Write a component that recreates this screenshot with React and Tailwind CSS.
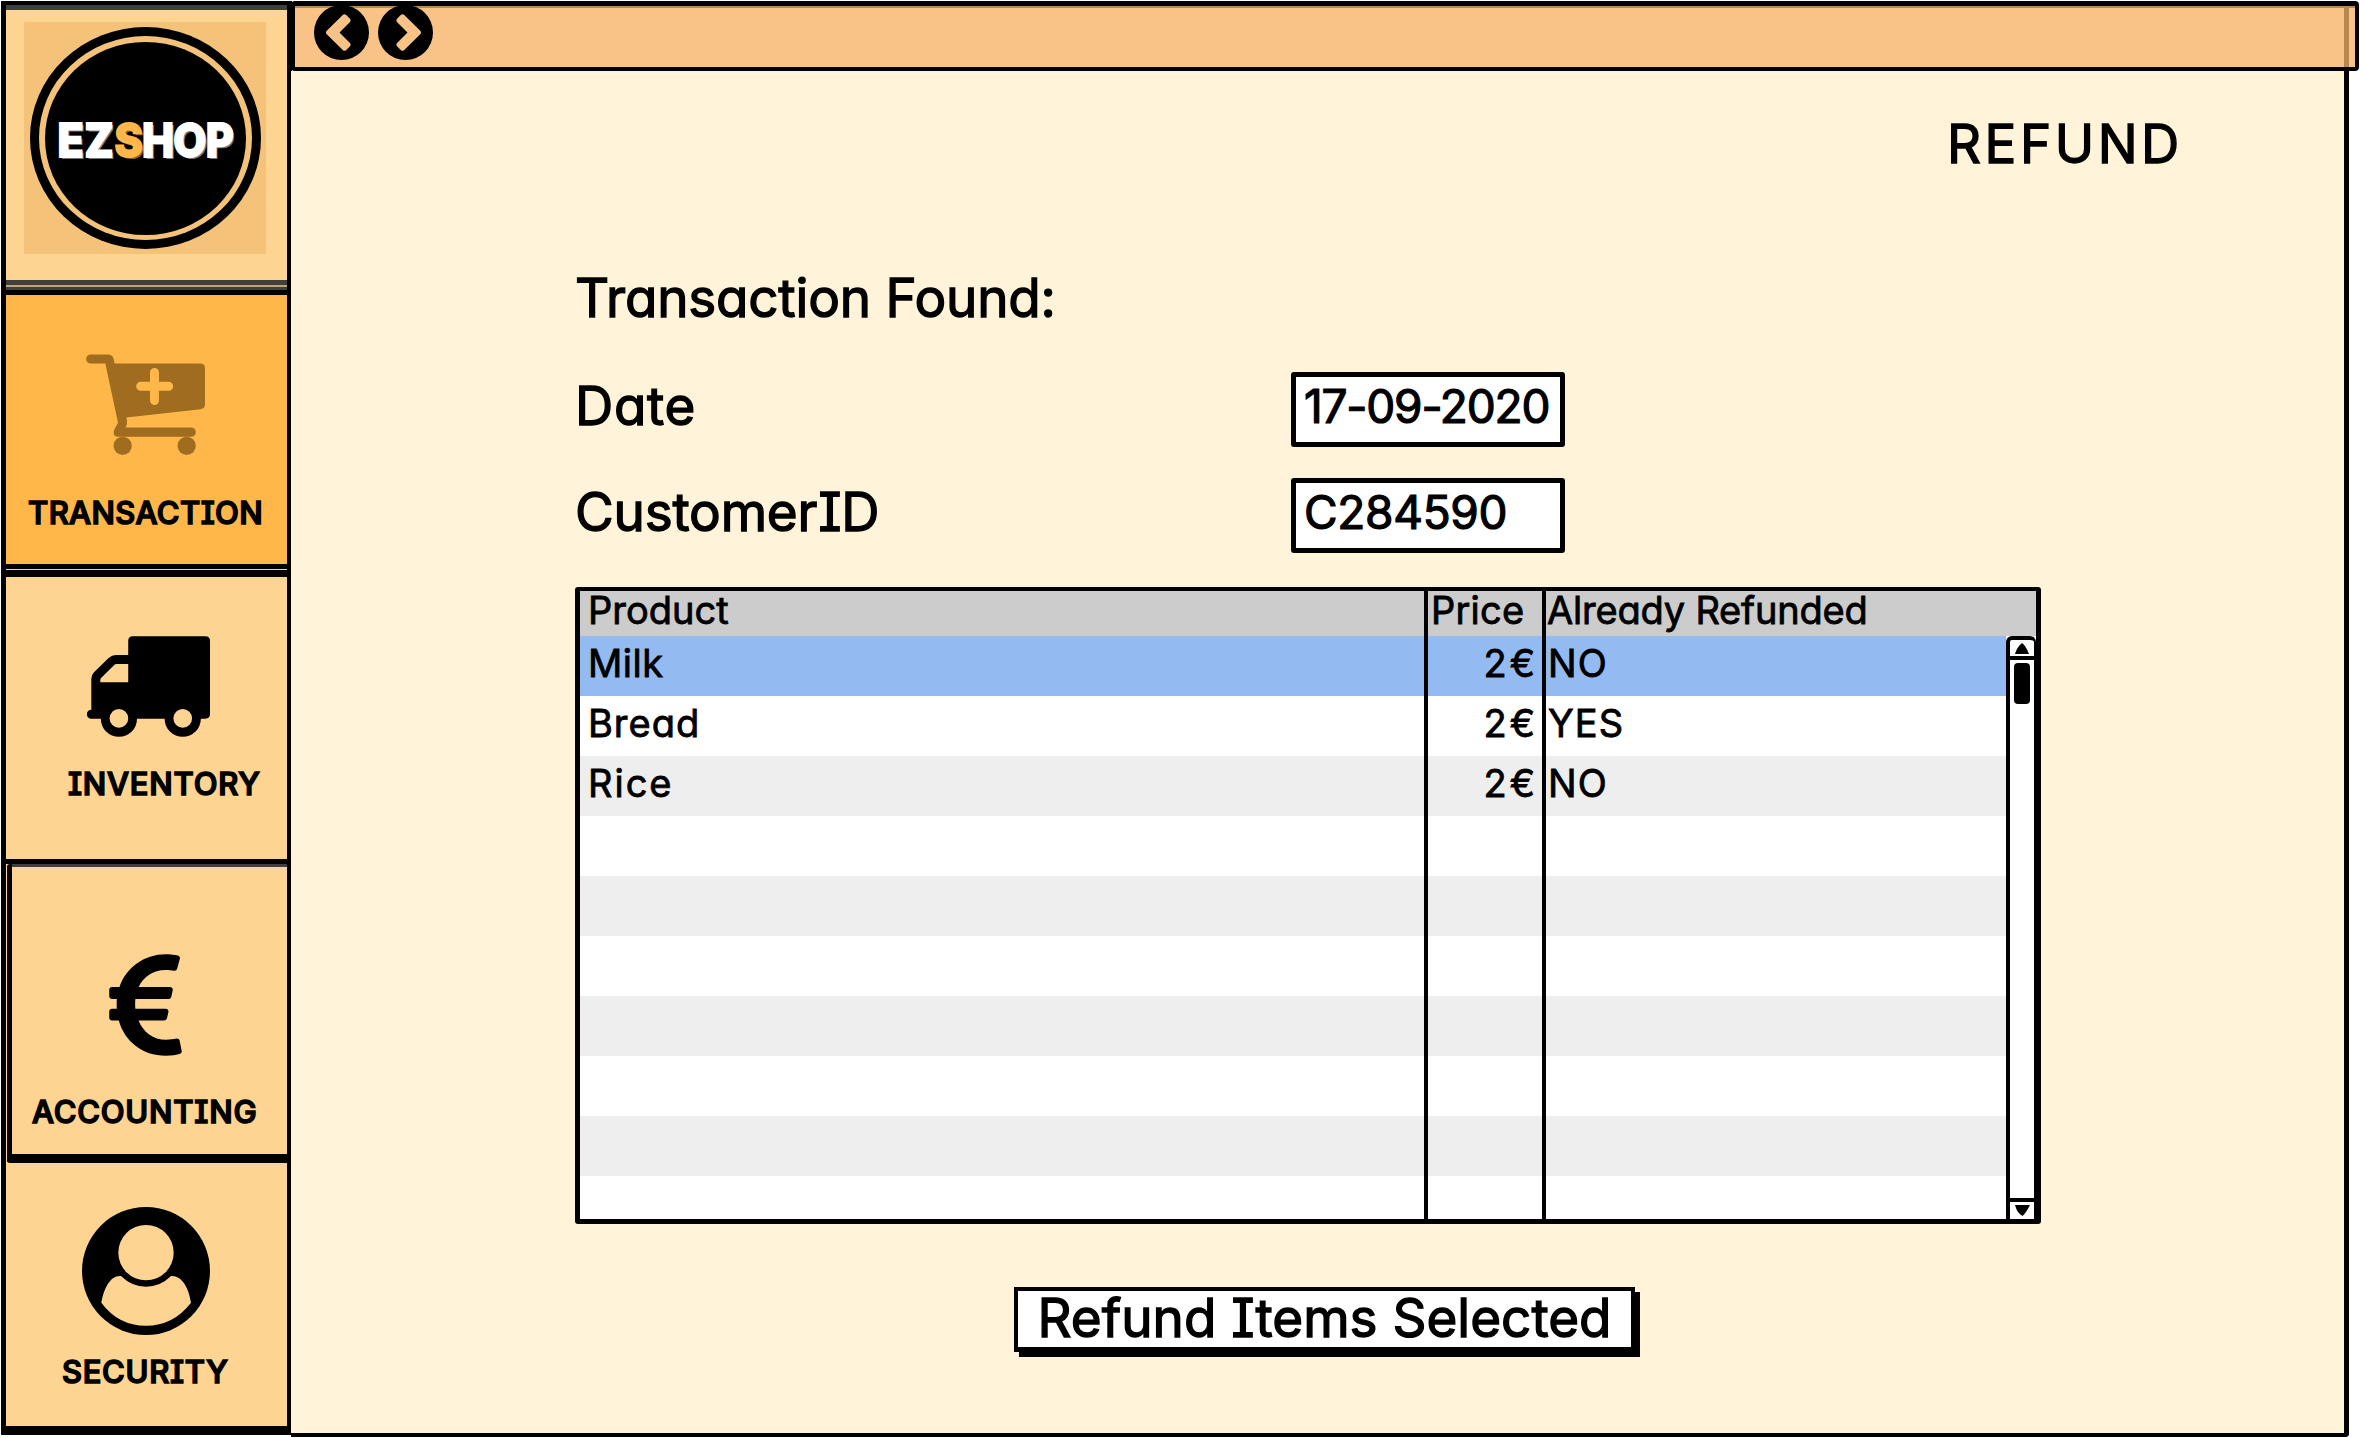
import clsx from "clsx";
import { FaEuroSign } from "react-icons/fa";

const navLabel =
  "text-[31px] leading-10 font-medium whitespace-nowrap [-webkit-text-stroke:1.6px_black]";
const heading =
  "text-[53px] leading-[60px] whitespace-nowrap [-webkit-text-stroke:1.3px_black]";
const tableText =
  "text-[38px] leading-[44px] whitespace-nowrap [-webkit-text-stroke:0.8px_black]";

function Logo() {
  return (
    <div className="ml-[18px] flex h-[232px] w-[242px] items-center justify-center bg-[#f4c279]">
      <div className="flex h-[222px] w-[231px] items-center justify-center rounded-[50%] bg-black">
        <div className="flex h-[204px] w-[213px] items-center justify-center rounded-[50%] bg-[#f4c279]">
          <div className="flex h-[193px] w-[201px] items-center justify-center rounded-[50%] bg-black pt-1">
            <span className="inline-block scale-x-[0.93] text-[46px] leading-none font-extrabold tracking-[-0.8px] whitespace-nowrap text-white [-webkit-text-stroke:2px_white] [text-shadow:2px_2px_0_#777]">
              <span className="tracking-[1px]">EZ</span>
              <span className="text-[#ffb74a] [-webkit-text-stroke:2px_#ffb74a] [text-shadow:2px_2px_0_#8a6428]">
                S
              </span>
              HOP
            </span>
          </div>
        </div>
      </div>
    </div>
  );
}

function CartIcon() {
  return (
    <svg viewBox="258 253 357 302" className="h-[101px] w-[119px] fill-[#a06c20]">
      <path
        fillRule="evenodd"
        d="M272 254H324Q338 254 341 268L344 281H601Q615 281 615 295V404Q615 416 602 418L379 443Q382 450 381 462L377 473H573.500A14 14 0 0 1 573.500 501H355Q341 501 341 488Q341 483 344 477L354 459L316 281H272A13.500 13.500 0 0 1 272 254ZM450 308V336H422A13.500 13.500 0 0 0 422 363H450V392A13.500 13.500 0 0 0 477 392V363H506A13.500 13.500 0 0 0 506 336H477V308A13.500 13.500 0 0 0 450 308Z"
      />
      <circle cx="368" cy="528" r="27.5" />
      <circle cx="560" cy="528" r="27.5" />
    </svg>
  );
}

function TruckIcon() {
  return (
    <svg viewBox="260 229 370 302" className="h-[101px] w-[123px]">
      <path
        fillRule="evenodd"
        d="M384 243Q384 229 398 229H616Q630 229 630 243V463Q630 477 616 477H273A13.500 13.500 0 0 1 273 450V357Q273 345 281 337L325 294Q335 285 347 285H384ZM349 312Q345 312 342 315L303 354Q300 357 300 361V367H384V312Z"
      />
      <circle cx="356" cy="477" r="54.500" />
      <circle cx="548" cy="477" r="54.500" />
      <circle cx="356" cy="476" r="28" fill="#fed492" />
      <circle cx="548" cy="476" r="28" fill="#fed492" />
    </svg>
  );
}

function UserIcon() {
  return (
    <svg viewBox="246 211 384 384" className="size-32">
      <circle cx="438" cy="403" r="192" />
      <circle cx="438" cy="348" r="83" fill="#fed492" />
      <path
        fill="#fed492"
        d="M304 498C313 450 333 415 363 418Q395 450 438 450Q481 450 513 418C543 415 566 450 573 498Q520 567 438 567Q355 567 304 498Z"
      />
    </svg>
  );
}

function ArrowButton({ next }) {
  return (
    <button type="button" aria-label={next ? "Forward" : "Back"} className="size-[55px]">
      <svg viewBox="0 0 55 55" className={clsx("size-[55px]", next && "-scale-x-100")}>
        <circle cx="27.500" cy="27.500" r="27.500" />
        <path
          d="M12.500 26Q11.300 27.500 12.500 29L29 45.200Q30.500 46.500 32 45.200L36 41.300Q37.500 39.500 36 38L25.500 27.500L36 17Q37.500 15.500 36 13.700L32 9.800Q30.500 8.500 29 9.800Z"
          fill="#f9c387"
        />
      </svg>
    </button>
  );
}

function Sidebar() {
  return (
    <aside className="flex h-[1434px] w-[291px] shrink-0 flex-col border-x-[5px] border-b-[9px] border-black bg-[#fed492]">
      <div className="h-[289px] border-t-[4px] border-black">
        <div className="h-[5px] bg-[#3f3f3f]" />
        <div className="h-[270px] pt-[12px]">
          <Logo />
        </div>
        <div className="h-[5px] bg-[#3f3f3f]" />
        <div className="h-[2px] bg-[#c0a27a]" />
        <div className="h-[3px] bg-[#3f3f3f]" />
      </div>
      <div className="flex h-[279px] flex-col border-y-[5px] border-black bg-[#ffb74a]">
        <div className="mt-[59px] ml-[80px]">
          <CartIcon />
        </div>
        <div className={clsx(navLabel, "mt-[38px] ml-[22px] tracking-[0.4px]")}>TRANSACTION</div>
      </div>
      <div className="mt-px flex h-[294px] flex-col border-t-[7px] border-b-[5px] border-black">
        <div className="mt-[59px] ml-[81px]">
          <TruckIcon />
        </div>
        <div className={clsx(navLabel, "mt-[27px] ml-[62px] tracking-[0.8px]")}>INVENTORY</div>
      </div>
      <div className="ml-px flex h-[299px] flex-col rounded-l-[3px] border-b-[9px] border-l-[5px] border-black">
        <div className="h-[3px] bg-[#3f3f3f]" />
        <FaEuroSign className="mt-[80px] ml-[97px] h-[116px] w-[73px]" />
        <div className={clsx(navLabel, "mt-[29px] ml-[20px] tracking-[0.8px]")}>ACCOUNTING</div>
      </div>
      <div className="flex flex-col">
        <div className="mt-[44px] ml-[76px]">
          <UserIcon />
        </div>
        <div className={clsx(navLabel, "mt-[17px] ml-[56px] tracking-[0.7px]")}>SECURITY</div>
      </div>
    </aside>
  );
}

function Topbar() {
  return (
    <header className="flex h-[70px] w-[2068px] items-start rounded-sm border-[4px] border-t-[5px] border-black bg-[#f9c387]">
      <div className="flex h-full w-full border-t-[2px] border-[#b98750]">
        <div className="-mt-[3px] ml-[19px] flex flex-1 gap-[9px]">
          <ArrowButton />
          <ArrowButton next />
        </div>
        <div className="mr-[6px] w-[5px] bg-[#b98750]" />
      </div>
    </header>
  );
}

function Field({ label, value, className, valueClassName }) {
  return (
    <div className="flex h-[75px] w-[990px] items-center justify-between">
      <span className={clsx(heading, "pb-[8px]", className)}>{label}</span>
      <div className="flex h-[75px] w-[274px] items-center rounded-[3px] border-[5px] border-black bg-white pb-[8px] pl-[8px]">
        <span
          className={clsx(
            "text-[46px] leading-none whitespace-nowrap [-webkit-text-stroke:1.2px_black]",
            valueClassName,
          )}
        >
          {value}
        </span>
      </div>
    </div>
  );
}

const rows = [
  { product: "Milk", price: "2€", refunded: "NO", bg: "bg-[#94baf2]", gap: "tracking-[0.5px]" },
  { product: "Bread", price: "2€", refunded: "YES", bg: "bg-white", gap: "tracking-[1px]" },
  { product: "Rice", price: "2€", refunded: "NO", bg: "bg-[#eeeeee]", gap: "tracking-[2px]" },
  { bg: "bg-white" },
  { bg: "bg-[#eeeeee]" },
  { bg: "bg-white" },
  { bg: "bg-[#eeeeee]" },
  { bg: "bg-white" },
  { bg: "bg-[#eeeeee]" },
  { bg: "bg-white" },
];

const columns = "grid grid-cols-[844px_4px_114px_4px_1fr]";

function Scrollbar() {
  return (
    <div className="flex w-[30px] shrink-0 flex-col rounded-t-md border-t-[4px] border-r-[2px] border-l-[4px] border-black bg-white">
      <div className="flex h-[20px] items-center justify-center border-b-[4px] border-black">
        <svg viewBox="0 0 16 11" className="h-[11px] w-4">
          <path d="M1 11Q3 4 8 0Q12 3 15 11Z" />
        </svg>
      </div>
      <div className="mt-[3px] ml-[4px] h-[41px] w-[16px] rounded-[4px] bg-black" />
      <div className="flex-1" />
      <div className="flex h-[21px] items-center justify-center border-t-[4px] border-black">
        <svg viewBox="0 0 15 11" className="h-[11px] w-[15px]">
          <path d="M0 0H15Q11 8 7.500 11Q2 8 0 0Z" />
        </svg>
      </div>
    </div>
  );
}

function ProductTable() {
  return (
    <div className="flex h-[637px] w-[1466px] flex-col overflow-hidden rounded-[3px] border-[5px] border-t-[4px] border-black bg-white">
      <div className={clsx(columns, "h-[45px] shrink-0 bg-[#cccccc]")}>
        <div className={clsx(tableText, "-mt-[3px] pl-[8px]")}>Product</div>
        <div className="bg-black" />
        <div className={clsx(tableText, "-mt-[3px] pl-[3px] tracking-[0.2px]")}>Price</div>
        <div className="bg-black" />
        <div className={clsx(tableText, "-mt-[3px] pl-[1px] tracking-[-0.2px]")}>Already Refunded</div>
      </div>
      <div className="flex min-h-0 flex-1">
        <div className="flex-1 overflow-hidden">
          {rows.map((row, i) => (
            <div key={i} className={clsx(columns, "h-[60px]", row.bg)}>
              <div className={clsx(tableText, "pt-[5px] pl-[8px]", row.gap)}>{row.product}</div>
              <div className="bg-black" />
              <div className={clsx(tableText, "pt-[5px] pr-[4px] text-right tracking-[3px]")}>
                {row.price}
              </div>
              <div className="bg-black" />
              <div className={clsx(tableText, "pt-[5px] pl-[2px] tracking-[1px]")}>{row.refunded}</div>
            </div>
          ))}
        </div>
        <Scrollbar />
      </div>
    </div>
  );
}

export default function App() {
  return (
    <div className="flex h-[1438px] w-[2360px] overflow-hidden bg-white pt-px pl-px font-['Inter',sans-serif] text-black [font-feature-settings:'cv11','cv08']">
      <Sidebar />
      <div className="-ml-px flex h-[1436px] flex-col">
        <Topbar />
        <main className="flex w-[2058px] flex-1 flex-col rounded-br-sm border-r-[5px] border-b-[4px] border-black bg-[#fff4d9] pl-[284px]">
          <h1 className={clsx(heading, "mt-[43px] ml-[1372px] tracking-[3.5px]")}>REFUND</h1>
          <h2 className={clsx(heading, "mt-[94px] tracking-[-0.2px]")}>Transaction Found:</h2>
          <div className="mt-[44px] flex flex-col gap-[31px]">
            <Field label="Date" value="17-09-2020" className="tracking-[0.7px]" valueClassName="tracking-[-1.2px]" />
            <Field label="CustomerID" value="C284590" className="tracking-[-0.2px]" valueClassName="tracking-[-0.3px]" />
          </div>
          <div className="mt-[34px]">
            <ProductTable />
          </div>
          <button
            type="button"
            className={clsx(
              heading,
              "mt-[63px] ml-[439px] flex h-[65px] w-[621px] items-center justify-center border-[4px] border-b-[5px] border-black bg-white pb-[3px] shadow-[5px_5px_0_0_black]",
            )}
          >
            Refund Items Selected
          </button>
        </main>
      </div>
    </div>
  );
}
